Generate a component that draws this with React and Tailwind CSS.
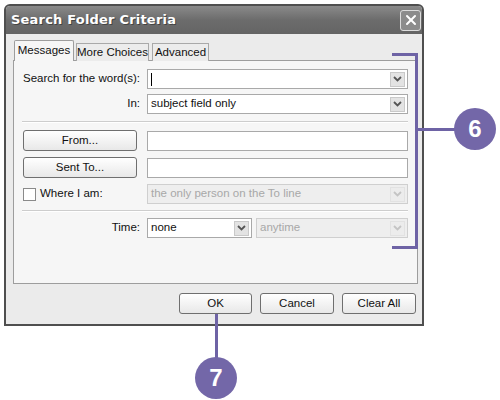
import { X } from 'lucide-react';

const FONT = { fontFamily: '"Liberation Sans", Arial, sans-serif' };

function Chevron({ disabled }) {
  return (
    <div
      className={`w-[15px] h-[15px] mr-[2px] flex items-center justify-center border ${
        disabled ? 'border-[#e2e2e2] bg-[#ececec]' : 'border-[#c9c9c9] bg-[#e3e3e3]'
      }`}
    >
      <svg width="9" height="6" viewBox="0 0 9 6">
        <path d="M1 1 L4.5 4.5 L8 1" fill="none" stroke={disabled ? '#c4c4c4' : '#555'} strokeWidth="1.8" />
      </svg>
    </div>
  );
}

function Combo({ value, disabled, className = '' }) {
  return (
    <div
      className={`h-[20px] flex items-center border ${
        disabled ? 'border-[#cfcfcf] bg-[#eeeeee] text-[#a8a8a8]' : 'border-[#a9a9a9] bg-white text-[#111]'
      } ${className}`}
    >
      <div className="flex-1 pl-[3px] truncate">{value}</div>
      <Chevron disabled={disabled} />
    </div>
  );
}

function TextBox({ children }) {
  return (
    <div className="flex-1 h-[20px] flex items-center border border-[#a9a9a9] bg-white pl-[3px]">{children}</div>
  );
}

function Btn({ children, className = '' }) {
  return (
    <div
      className={`h-[21px] flex items-center justify-center rounded-[3px] border border-[#6f6f6f] bg-gradient-to-b from-white to-[#e8e8e8] text-[#111] whitespace-nowrap ${className}`}
    >
      {children}
    </div>
  );
}

function Label({ children }) {
  return <div className="w-[133px] text-right pr-[7px] shrink-0 whitespace-nowrap">{children}</div>;
}

export default function App() {
  return (
    <div className="w-[500px] h-[400px] bg-white relative text-[11.5px] text-[#111]" style={FONT}>
      <div className="pt-[4px] pl-[4px]">
        <div className="w-[420px] h-[322px] border-2 border-[#4f4f4f] rounded-t-[6px] bg-[#ebebeb] flex flex-col overflow-hidden">
          {/* title bar */}
          <div className="h-[28px] shrink-0 flex items-center justify-between bg-gradient-to-b from-[#8a8a8a] via-[#6c6c6c] to-[#646464] pl-[5px] pr-[1px]">
            <span
              className="text-white font-bold text-[13px] tracking-[0.2px]"
              style={{ fontFamily: '"DejaVu Sans", sans-serif', textShadow: '1px 1px 0 #444' }}
            >
              Search Folder Criteria
            </span>
            <div className="w-[21px] h-[21px] rounded-[3px] border border-[#dcdcdc] bg-[#8c8c8c] flex items-center justify-center">
              <X size={16} strokeWidth={3} color="#fff" />
            </div>
          </div>

          {/* body */}
          <div className="flex-1 flex flex-col pl-[7px] pr-[4px] pt-[6px]">
            {/* tabs */}
            <div className="flex items-end h-[21px] pl-[1px] relative z-10 whitespace-nowrap">
              <div className="h-[21px] w-[60px] border border-b-0 border-[#9d9d9d] bg-[#f6f6f6] rounded-t-[2px] flex items-center justify-center">
                Messages
              </div>
              <div className="h-[18px] w-[73px] ml-[2px] border border-b-0 border-[#a9a9a9] bg-[#ececec] flex items-center justify-center">
                More Choices
              </div>
              <div className="h-[18px] w-[57px] ml-[3px] border border-b-0 border-[#a9a9a9] bg-[#ececec] flex items-center justify-center">
                Advanced
              </div>
            </div>

            {/* panel */}
            <div className="h-[224px] -mt-[1px] border border-[#9d9d9d] bg-[#f6f6f6] flex flex-col pt-[8px] pr-[9px]">
              <div className="flex items-center">
                <Label>Search for the word(s):</Label>
                <Combo
                  className="flex-1"
                  value={<span className="inline-block w-px h-[13px] bg-black align-middle" />}
                />
              </div>
              <div className="flex items-center mt-[5px]">
                <Label>In:</Label>
                <Combo className="flex-1" value="subject field only" />
              </div>

              <div className="ml-[8px] mt-[7px] mb-[7px] border-t border-[#cdcdcd] border-b border-b-white" />

              <div className="flex items-center">
                <div className="w-[133px] pl-[9px] pr-[10px] shrink-0">
                  <Btn>From...</Btn>
                </div>
                <TextBox />
              </div>
              <div className="flex items-center mt-[6px]">
                <div className="w-[133px] pl-[9px] pr-[10px] shrink-0">
                  <Btn>Sent To...</Btn>
                </div>
                <TextBox />
              </div>
              <div className="flex items-center mt-[6px]">
                <div className="w-[133px] pl-[9px] shrink-0 flex items-center whitespace-nowrap">
                  <div className="w-[13px] h-[13px] border border-[#8a8a8a] bg-white" />
                  <span className="ml-[4px]">Where I am:</span>
                </div>
                <Combo className="flex-1" disabled value="the only person on the To line" />
              </div>

              <div className="ml-[8px] mt-[6px] mb-[6px] border-t border-[#cdcdcd] border-b border-b-white" />

              <div className="flex items-center">
                <Label>Time:</Label>
                <Combo className="w-[105px]" value="none" />
                <Combo className="flex-1 ml-[4px]" disabled value="anytime" />
              </div>
            </div>

            {/* buttons */}
            <div className="flex justify-end gap-[8px] mt-[9px] pr-[2px]">
              <Btn className="w-[73px]">OK</Btn>
              <Btn className="w-[74px]">Cancel</Btn>
              <Btn className="w-[74px]">Clear All</Btn>
            </div>
          </div>
        </div>
      </div>

      {/* annotation 6 */}
      <div className="absolute left-[392px] top-[53px] w-[26px] h-[196px] border-t-[3px] border-r-[3px] border-b-[3px] border-[#6e63a5]" />
      <div className="absolute left-[418px] top-[128px] w-[40px] h-[3px] bg-[#6e63a5]" />
      <div
        className="absolute left-[454px] top-[108px] w-[42px] h-[42px] rounded-full bg-[#7367a8] flex items-center justify-center text-white text-[24px] font-bold"
        style={{ fontFamily: '"Liberation Sans", sans-serif' }}
      >
        6
      </div>

      {/* annotation 7 */}
      <div className="absolute left-[215px] top-[314px] w-[3px] h-[45px] bg-[#6e63a5]" />
      <div
        className="absolute left-[195px] top-[357px] w-[42px] h-[42px] rounded-full bg-[#7367a8] flex items-center justify-center text-white text-[24px] font-bold"
        style={{ fontFamily: '"Liberation Sans", sans-serif' }}
      >
        7
      </div>
    </div>
  );
}
